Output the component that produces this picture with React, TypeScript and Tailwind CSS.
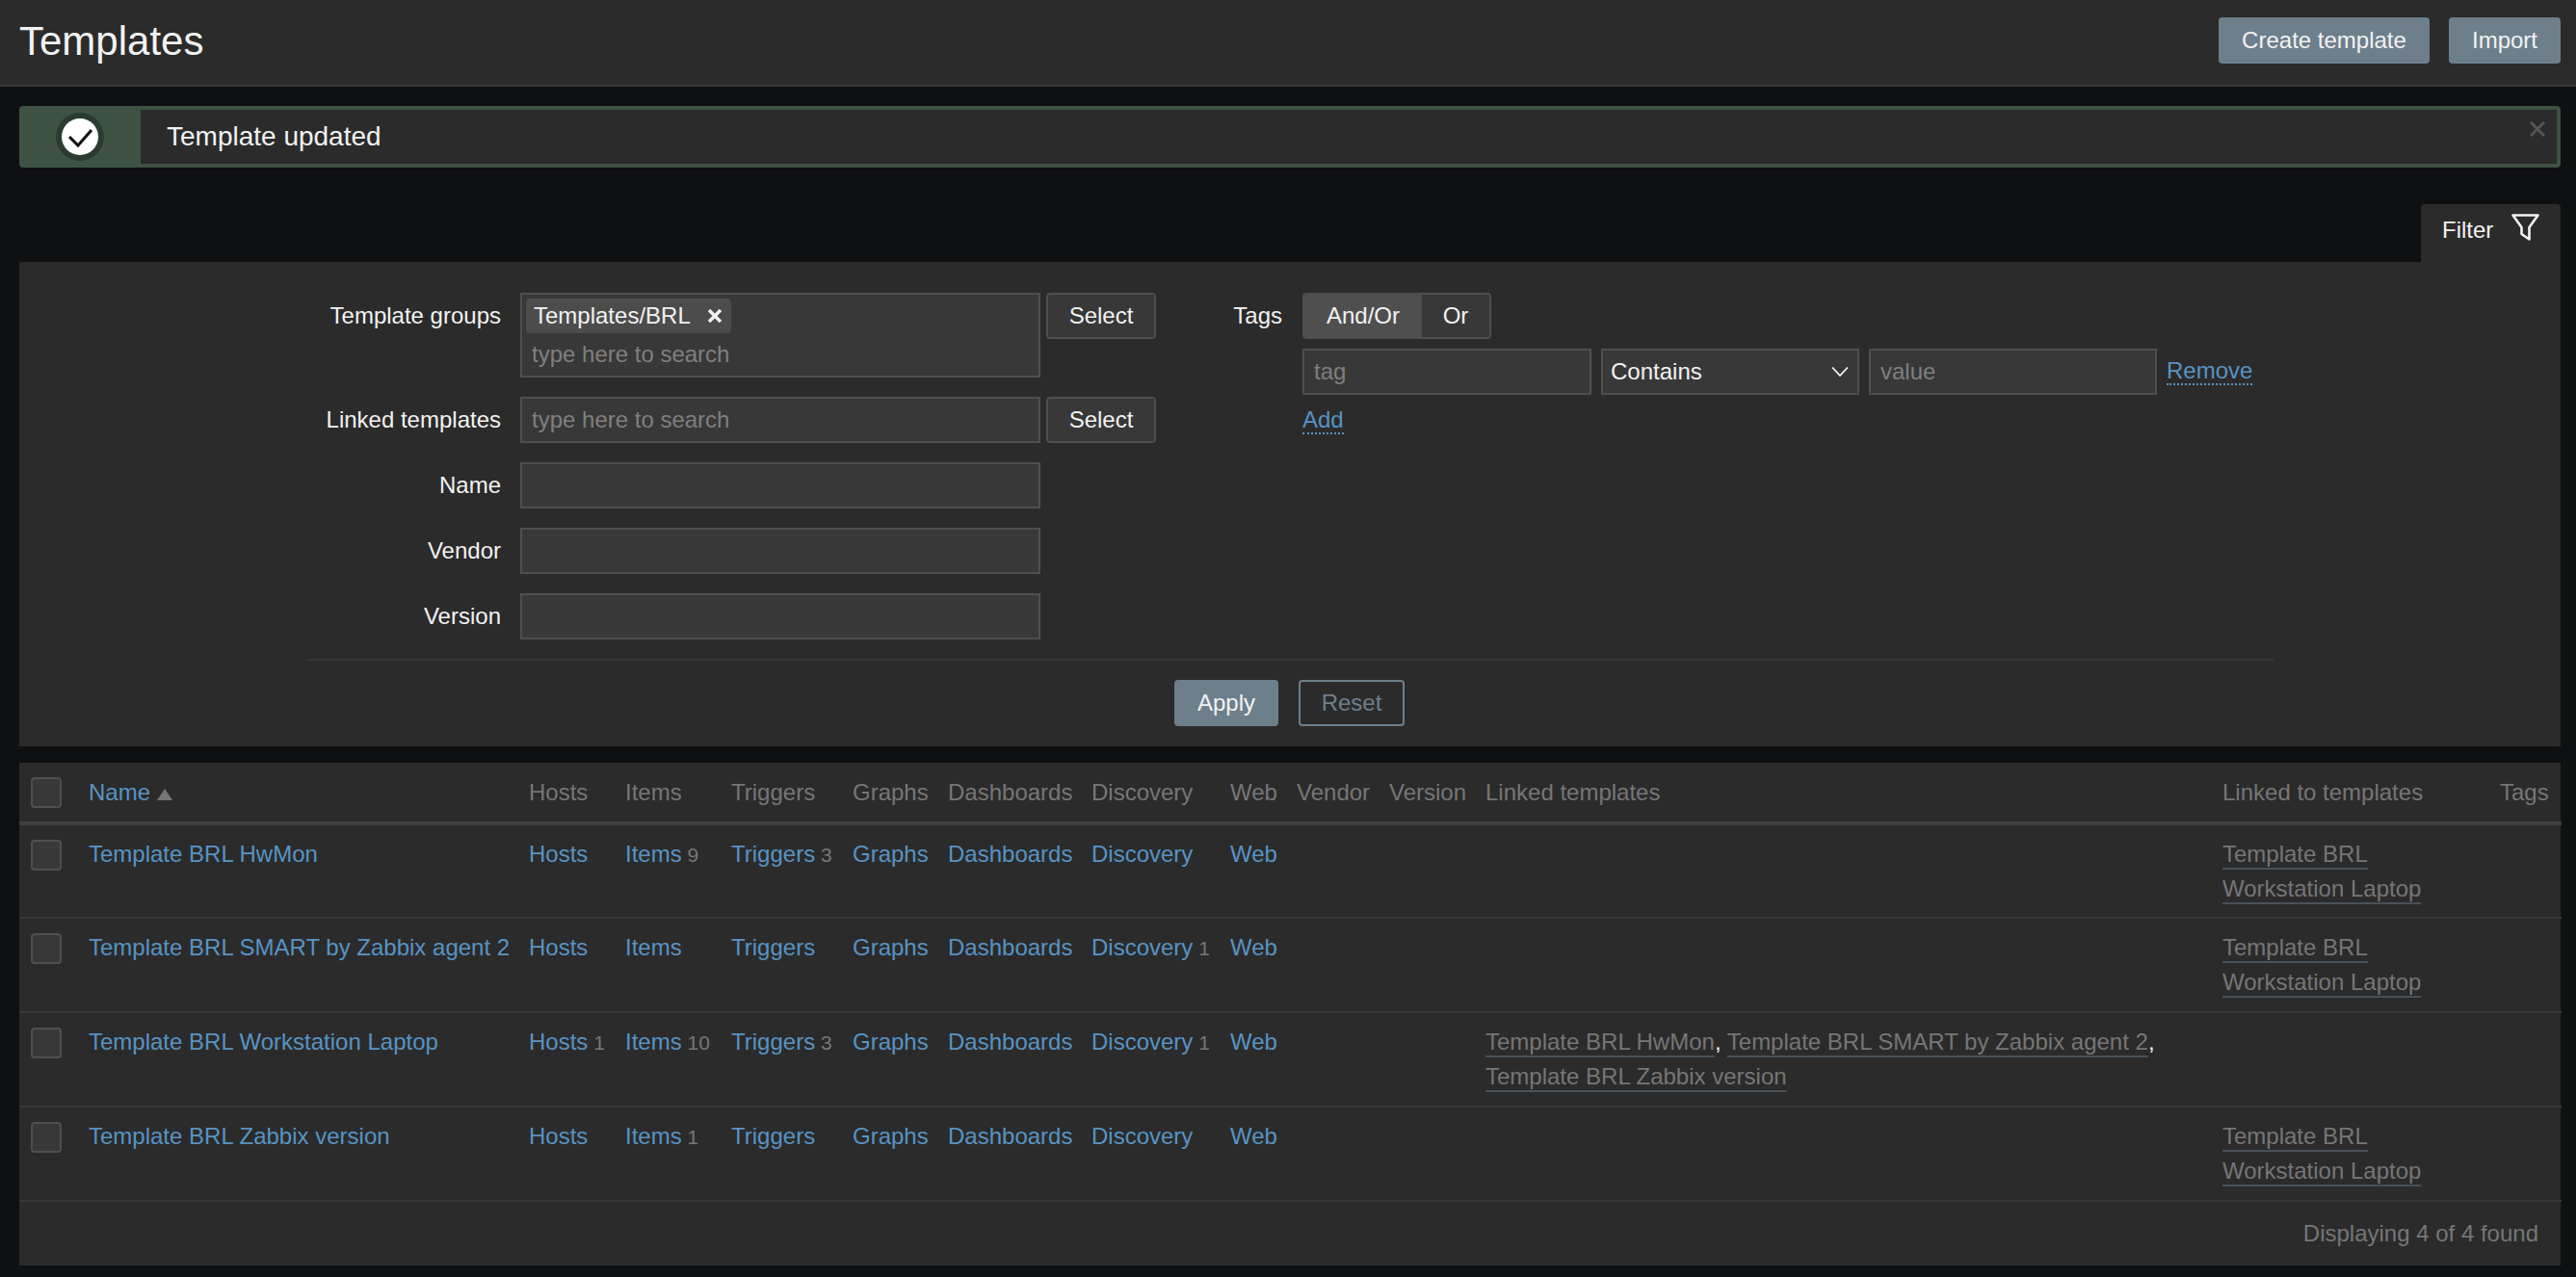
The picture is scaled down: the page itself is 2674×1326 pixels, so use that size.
import React from "react";

const link = "text-[#5893c3]";
const muted = "text-[#767676]";

function Check({ className = "" }: { className?: string }) {
  return <div className={`w-[32px] h-[32px] rounded-[4px] bg-[#383838] border-2 border-[#4f4f4f] ${className}`} />;
}

function Input({ placeholder = "", w = "w-[540px]" }: { placeholder?: string; w?: string }) {
  return (
    <input
      readOnly
      placeholder={placeholder}
      className={`${w} h-[48px] bg-[#383838] border-2 border-[#4f4f4f] px-[10px] text-[24px] text-[#f2f2f2] placeholder:text-[#7f7f7f] outline-none`}
    />
  );
}

function SelectBtn() {
  return (
    <button className="w-[114px] h-[48px] ml-[6px] bg-[#383838] border-2 border-[#4f4f4f] rounded-[4px] text-[#f2f2f2] text-[24px]">
      Select
    </button>
  );
}

function Row({ label, children }: { label: string; children: React.ReactNode }) {
  return (
    <div className="flex">
      <div className="w-[201px] mr-[20px] text-right text-[#f2f2f2] leading-[48px]">{label}</div>
      {children}
    </div>
  );
}

function Count({ n }: { n?: number }) {
  return n === undefined ? null : <span className={`${muted} text-[21px]`}> {n}</span>;
}

function Linked({ children }: { children: string }) {
  return <span className={`${muted} border-b-2 border-[#4a5157] pb-[1px]`}>{children}</span>;
}

type R = {
  name: string;
  hosts?: number;
  items?: number;
  triggers?: number;
  discovery?: number;
  linked?: boolean;
  linkedTo?: boolean;
};

const rows: R[] = [
  { name: "Template BRL HwMon", items: 9, triggers: 3, linkedTo: true },
  { name: "Template BRL SMART by Zabbix agent 2", discovery: 1, linkedTo: true },
  { name: "Template BRL Workstation Laptop", hosts: 1, items: 10, triggers: 3, discovery: 1, linked: true },
  { name: "Template BRL Zabbix version", items: 1, linkedTo: true },
];

const widths = [60, 457, 100, 110, 126, 99, 149, 144, 69, 96, 100, 765, 288, 76];
const heads = ["Hosts", "Items", "Triggers", "Graphs", "Dashboards", "Discovery", "Web", "Vendor", "Version", "Linked templates", "Linked to templates", "Tags"];

export default function App() {
  return (
    <div className="min-h-[1326px] bg-[#0e1012] text-[24px] text-[#f2f2f2] font-['Liberation_Sans',Arial,sans-serif]">
      <header className="h-[90px] bg-[#2b2b2b] border-b-2 border-[#383838] flex items-center justify-between pl-[20px] pr-[16px]">
        <h1 className="text-[42px] leading-[48px] text-[#f2f2f2] -mt-[3px]">Templates</h1>
        <div className="flex gap-[20px] -mt-[4px]">
          <button className="w-[219px] h-[48px] bg-[#6d7f8b] rounded-[4px] text-[#f2f2f2] text-[24px]">Create template</button>
          <button className="w-[116px] h-[48px] bg-[#6d7f8b] rounded-[4px] text-[#f2f2f2] text-[24px]">Import</button>
        </div>
      </header>

      <main className="pl-[20px] pr-[16px]">
        <div className="mt-[20px] h-[64px] flex border-4 border-[#3d5243] rounded-[4px] bg-[#2b2b2b] relative">
          <div className="w-[122px] pr-[4px] bg-[#3d5243] flex items-center justify-center shrink-0">
            <div className="w-[50px] h-[50px] rounded-full bg-[#2b3b31] flex items-center justify-center">
              <div className="w-[38px] h-[38px] rounded-full bg-white flex items-center justify-center">
                <svg width="26" height="26" viewBox="0 0 26 26" fill="none">
                  <path d="M2 13 L11 22 L25 6" stroke="#0e1012" strokeWidth="3" />
                </svg>
              </div>
            </div>
          </div>
          <div className="pl-[27px] text-[28px] leading-[56px] text-[#f2f2f2]">Template updated</div>
          <svg className="absolute right-[12px] top-[12px]" width="16" height="16" viewBox="0 0 16 16">
            <path d="M1 1 L15 15 M15 1 L1 15" stroke="#565656" strokeWidth="3" />
          </svg>
        </div>

        <div className="mt-[38px] flex justify-end">
          <div className="w-[145px] h-[60px] bg-[#2b2b2b] rounded-t-[4px] flex items-start pl-[22px] pt-[9px]">
            <span className="leading-[36px] text-[#f2f2f2]">Filter</span>
            <svg className="ml-[19px] mt-[1px]" width="29" height="28" viewBox="0 0 29 28" fill="none">
              <path d="M1.5 1.5 H27.5 L18.5 14 V26.5 L10.5 21 V14 Z" stroke="#f2f2f2" strokeWidth="2.6" strokeLinejoin="round" />
            </svg>
          </div>
        </div>

        <section className="bg-[#2b2b2b] pt-[32px] pb-[21px]">
          <div className="ml-[299px] mr-[298px]">
            <div className="flex">
              <div className="flex flex-col gap-[20px]">
                <Row label="Template groups">
                  <div className="w-[540px] h-[88px] bg-[#383838] border-2 border-[#4f4f4f] pl-[4px] pt-[4px]">
                    <div className="w-[213px] h-[36px] bg-[#4c4c4c] rounded-[4px] flex items-center pl-[8px] text-[#f2f2f2]">
                      Templates/BRL
                      <svg className="ml-[17px]" width="16" height="16" viewBox="0 0 16 16">
                        <path d="M2 2 L14 14 M14 2 L2 14" stroke="#f2f2f2" strokeWidth="3.4" />
                      </svg>
                    </div>
                    <div className="text-[#7f7f7f] leading-[36px] pl-[6px] mt-[4px]">type here to search</div>
                  </div>
                  <SelectBtn />
                </Row>
                <Row label="Linked templates">
                  <Input placeholder="type here to search" />
                  <SelectBtn />
                </Row>
                <Row label="Name"><Input /></Row>
                <Row label="Vendor"><Input /></Row>
                <Row label="Version"><Input /></Row>
              </div>

              <div className="flex ml-[80px]">
                <div className="w-[51px] mr-[21px] text-right leading-[48px] text-[#f2f2f2]">Tags</div>
                <div>
                  <div className="flex w-[196px] h-[48px] border-2 border-[#4f4f4f] rounded-[4px] overflow-hidden">
                    <div className="w-[122px] bg-[#4f4f4f] text-center leading-[44px] text-[#f2f2f2]">And/Or</div>
                    <div className="flex-1 bg-[#383838] text-center leading-[44px] text-[#f2f2f2]">Or</div>
                  </div>
                  <div className="flex mt-[10px] items-center">
                    <Input placeholder="tag" w="w-[300px]" />
                    <div className="w-[268px] h-[48px] ml-[10px] bg-[#383838] border-2 border-[#4f4f4f] flex items-center justify-between pl-[8px] pr-[9px] text-[#f2f2f2]">
                      Contains
                      <svg width="18" height="12" viewBox="0 0 18 12" fill="none">
                        <path d="M1 1.5 L9 10 L17 1.5" stroke="#f2f2f2" strokeWidth="1.8" />
                      </svg>
                    </div>
                    <div className="ml-[10px]"><Input placeholder="value" w="w-[299px]" /></div>
                    <span className={`ml-[10px] ${link} border-b-2 border-dotted border-[#5893c3] leading-[26px]`}>Remove</span>
                  </div>
                  <div className="mt-[12px] flex">
                    <span className={`${link} border-b-2 border-dotted border-[#5893c3] leading-[27px]`}>Add</span>
                  </div>
                </div>
              </div>
            </div>

            <div className="mt-[20px] border-t-2 border-[#383838] pt-[20px] pr-[2px] flex justify-center gap-[21px]">
              <button className="w-[108px] h-[48px] bg-[#6d7f8b] rounded-[4px] text-[#f2f2f2] text-[24px]">Apply</button>
              <button className="w-[110px] h-[48px] border-2 border-[#6d7f8b] rounded-[4px] text-[#6d7f8b] text-[24px]">Reset</button>
            </div>
          </div>
        </section>

        <section className="mt-[17px] bg-[#2b2b2b]">
          <table className="w-full table-fixed border-collapse">
            <colgroup>
              {widths.map((w, i) => (
                <col key={i} style={{ width: w }} />
              ))}
            </colgroup>
            <thead>
              <tr className="h-[63px] border-b-4 border-[#3f3f3f]">
                <th className="pl-[12px] text-left font-normal align-middle"><Check /></th>
                <th className="pl-[12px] text-left font-normal">
                  <span className={link}>Name</span>
                  <svg className="inline-block ml-[7px] align-baseline" width="16" height="12" viewBox="0 0 16 12">
                    <path d="M8 0 L16 12 H0 Z" fill="#767676" />
                  </svg>
                </th>
                {heads.map((h) => (
                  <th key={h} className={`pl-[12px] text-left font-normal whitespace-nowrap ${muted}`}>{h}</th>
                ))}
              </tr>
            </thead>
            <tbody>
              {rows.map((r) => (
                <tr key={r.name} className="h-[98px] border-b-2 border-[#383838] align-top leading-[36px]">
                  <td className="pl-[12px] pt-[15px]"><Check /></td>
                  <td className={`pl-[12px] pt-[12px] whitespace-nowrap ${link}`}>{r.name}</td>
                  <td className={`pl-[12px] pt-[12px] whitespace-nowrap ${link}`}>Hosts<Count n={r.hosts} /></td>
                  <td className={`pl-[12px] pt-[12px] whitespace-nowrap ${link}`}>Items<Count n={r.items} /></td>
                  <td className={`pl-[12px] pt-[12px] whitespace-nowrap ${link}`}>Triggers<Count n={r.triggers} /></td>
                  <td className={`pl-[12px] pt-[12px] ${link}`}>Graphs</td>
                  <td className={`pl-[12px] pt-[12px] ${link}`}>Dashboards</td>
                  <td className={`pl-[12px] pt-[12px] whitespace-nowrap ${link}`}>Discovery<Count n={r.discovery} /></td>
                  <td className={`pl-[12px] pt-[12px] ${link}`}>Web</td>
                  <td />
                  <td />
                  <td className="pl-[12px] pt-[12px] text-[#f2f2f2]">
                    {r.linked && (
                      <>
                        <Linked>Template BRL HwMon</Linked>, <Linked>Template BRL SMART by Zabbix agent 2</Linked>,{" "}
                        <br />
                        <Linked>Template BRL Zabbix version</Linked>
                      </>
                    )}
                  </td>
                  <td className="pl-[12px] pt-[12px]">
                    {r.linkedTo && (
                      <>
                        <Linked>Template BRL</Linked>
                        <br />
                        <Linked>Workstation Laptop</Linked>
                      </>
                    )}
                  </td>
                  <td />
                </tr>
              ))}
            </tbody>
          </table>
          <div className={`h-[66px] flex items-center justify-end pr-[23px] ${muted}`}>Displaying 4 of 4 found</div>
        </section>
      </main>
    </div>
  );
}
